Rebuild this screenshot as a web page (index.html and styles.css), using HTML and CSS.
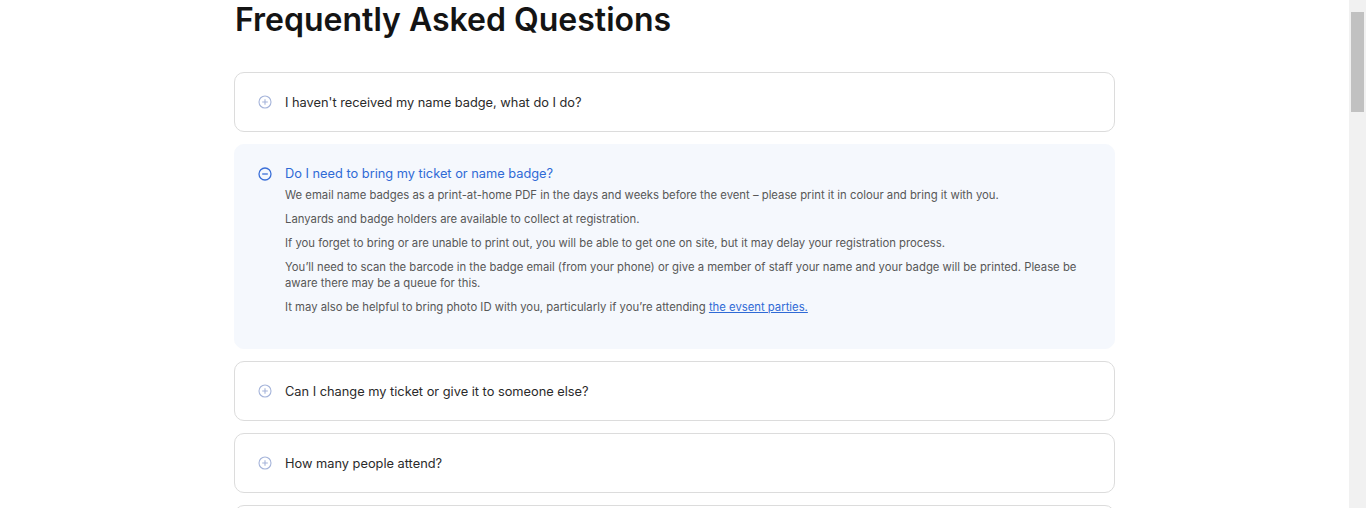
FILE: index.html
```html
<!DOCTYPE html>
<html lang="en">
<head>
<meta charset="utf-8">
<title>FAQ</title>
<link rel="stylesheet" href="styles.css">
</head>
<body>
<div class="frame">
  <main class="page">
    <section class="faq">
      <h1 class="faq-title">Frequently Asked Questions</h1>
      <div class="faq-list">
        <div class="faq-item">
          <div class="faq-q">
            <svg class="faq-icon" viewBox="0 0 14 14" width="14" height="14"><circle cx="7" cy="7" r="6" fill="none" stroke="currentColor" stroke-width="1.1"/><path d="M7 4.2v5.6M4.2 7h5.6" stroke="currentColor" stroke-width="1.1" fill="none"/></svg>
            <span>I haven't received my name badge, what do I do?</span>
          </div>
        </div>
        <div class="faq-item is-open">
          <div class="faq-q">
            <svg class="faq-icon" viewBox="0 0 14 14" width="14" height="14"><circle cx="7" cy="7" r="6" fill="none" stroke="currentColor" stroke-width="1.3"/><path d="M4.2 7h5.6" stroke="currentColor" stroke-width="1.3" fill="none"/></svg>
            <span>Do I need to bring my ticket or name badge?</span>
          </div>
          <div class="faq-a">
            <p>We email name badges as a print-at-home PDF in the days and weeks before the event – please print it in colour and bring it with you.</p>
            <p>Lanyards and badge holders are available to collect at registration.</p>
            <p>If you forget to bring or are unable to print out, you will be able to get one on site, but it may delay your registration process.</p>
            <p>You’ll need to scan the barcode in the badge email (from your phone) or give a member of staff your name and your badge will be printed. Please be aware there may be a queue for this.</p>
            <p>It may also be helpful to bring photo ID with you, particularly if you’re attending <a href="#">the evsent parties.</a></p>
          </div>
        </div>
        <div class="faq-item">
          <div class="faq-q">
            <svg class="faq-icon" viewBox="0 0 14 14" width="14" height="14"><circle cx="7" cy="7" r="6" fill="none" stroke="currentColor" stroke-width="1.1"/><path d="M7 4.2v5.6M4.2 7h5.6" stroke="currentColor" stroke-width="1.1" fill="none"/></svg>
            <span>Can I change my ticket or give it to someone else?</span>
          </div>
        </div>
        <div class="faq-item">
          <div class="faq-q">
            <svg class="faq-icon" viewBox="0 0 14 14" width="14" height="14"><circle cx="7" cy="7" r="6" fill="none" stroke="currentColor" stroke-width="1.1"/><path d="M7 4.2v5.6M4.2 7h5.6" stroke="currentColor" stroke-width="1.1" fill="none"/></svg>
            <span>How many people attend?</span>
          </div>
        </div>
        <div class="faq-item faq-item-edge"></div>
      </div>
    </section>
  </main>
  <div class="scrollbar"><div class="scrollbar-thumb"></div></div>
</div>
</body>
</html>
```
FILE: styles.css
```css
html, body {
  margin: 0;
  padding: 0;
  height: 100%;
  overflow: hidden;
  background: #ffffff;
}
body {
  font-family: "Inter", "Open Sans", sans-serif;
  color: #222;
}
.frame {
  display: flex;
  height: 508px;
  overflow: hidden;
}
.page {
  flex: 1;
  min-width: 0;
}
.faq {
  width: 881px;
  margin: 0 auto;
}
.faq-title {
  margin: 0;
  height: 72px;
  font-size: 32px;
  line-height: 40px;
  font-weight: 600;
  color: #141414;
  letter-spacing: 0;
  padding-left: 1px;
}
.faq-list {
  display: flex;
  flex-direction: column;
  gap: 12px;
}
.faq-item {
  border: 1px solid #dcdcdc;
  border-radius: 10px;
  background: #fff;
  padding: 0 23px;
  min-height: 58px;
}
.faq-item.is-open {
  background: #f5f8fd;
  border-color: #f5f8fd;
  padding-bottom: 25px;
}
.faq-q {
  display: flex;
  align-items: center;
  gap: 13px;
  height: 58px;
  font-size: 12.8px;
  color: #2a2a2a;
}
.is-open .faq-q {
  height: auto;
  padding-top: 20px;
  line-height: 18px;
  color: #2f6ad6;
}
.faq-icon {
  flex: none;
  color: #a5b4da;
}
.is-open .faq-icon {
  color: #3a6fd8;
}
.faq-a {
  padding-left: 27px;
  padding-top: 4px;
  font-size: 11.3px;
  line-height: 16px;
  color: #575757;
}
.faq-a p {
  margin: 0 0 8px;
  max-width: 800px;
}
.faq-a a {
  color: #2f6ad6;
  text-decoration: underline;
}
.scrollbar {
  flex: none;
  width: 17px;
  height: 508px;
  background: #f1f1f1;
  padding-top: 12px;
  box-sizing: border-box;
}
.scrollbar-thumb {
  width: 13px;
  height: 100px;
  margin-left: 2px;
  background: #c1c1c1;
}
```
